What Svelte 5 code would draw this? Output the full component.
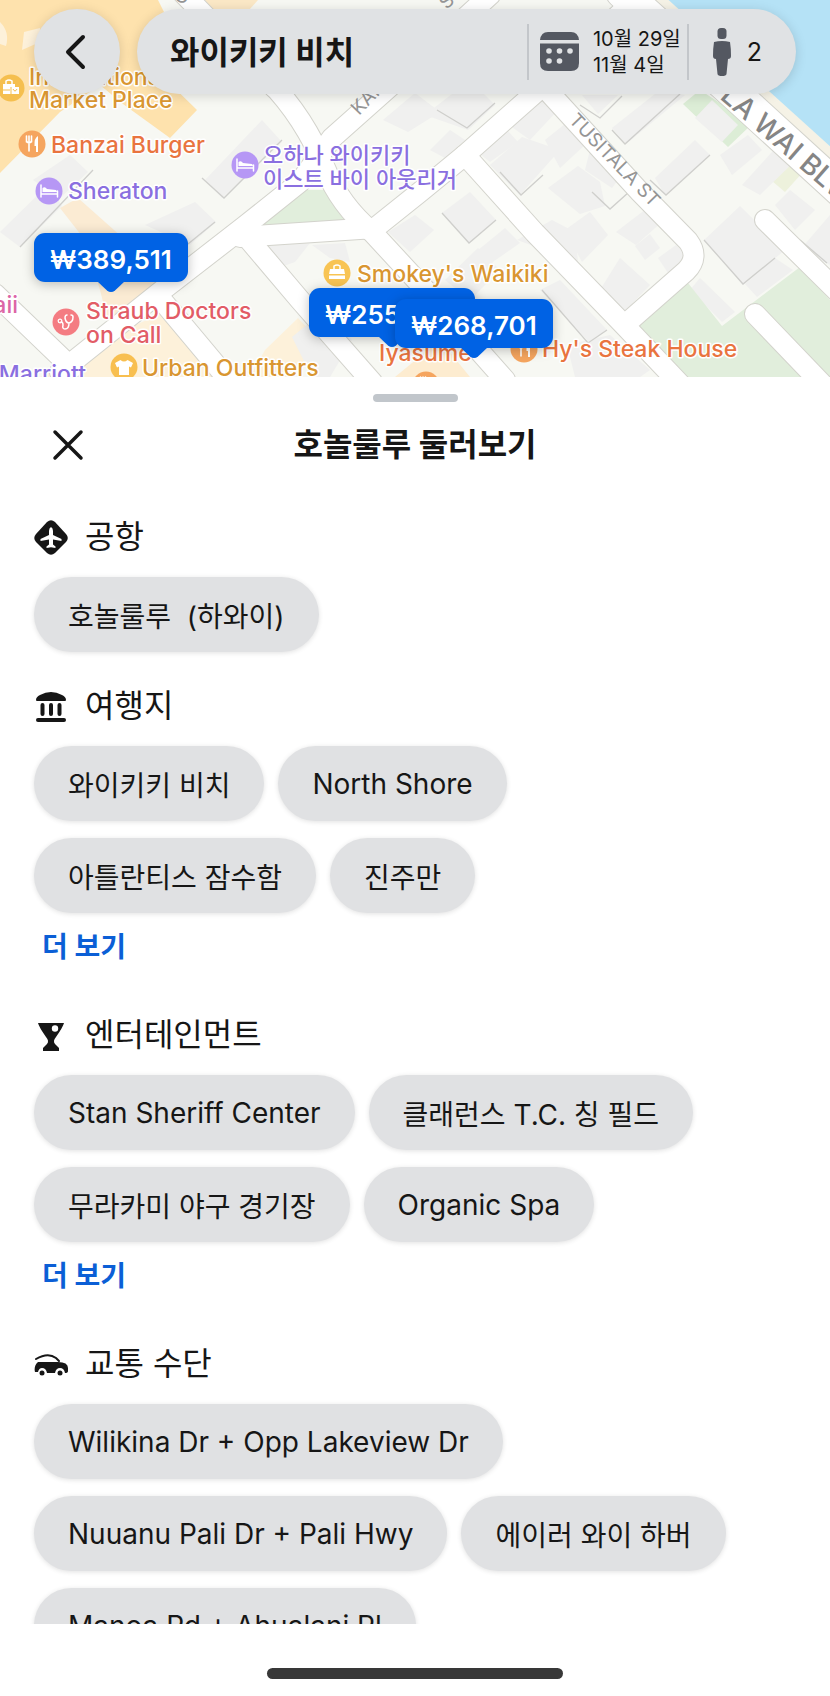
<script>

	let destination = '와이키키 비치';
	let city = '호놀룰루';
	let guests = 2;

	let sections = [
		{
			icon: 'airport',
			title: '공항',
			places: ['호놀룰루\u00a0 (하와이)'],
			more: false
		},
		{
			icon: 'landmark',
			title: '여행지',
			places: ['와이키키 비치', 'North Shore', '아틀란티스 잠수함', '진주만'],
			more: true
		},
		{
			icon: 'drink',
			title: '엔터테인먼트',
			places: ['Stan Sheriff Center', '클래런스 T.C. 칭 필드', '무라카미 야구 경기장', 'Organic Spa'],
			more: true
		},
		{
			icon: 'car',
			title: '교통 수단',
			places: ['Wilikina Dr + Opp Lakeview Dr', 'Nuuanu Pali Dr + Pali Hwy', '에이러 와이 하버', 'Manoa Rd + Ahualani Pl'],
			more: false
		}
	];

	// left/top are the corner of the tag on the map
	let prices = [
		{ text: '₩389,511', left: 34, top: 233, width: 154 },
		{ text: '₩255', left: 309, top: 288, width: 166 },
		{ text: '₩268,701', left: 395, top: 299, width: 158 }
	];

	let roads = [
		'M60 372 L160 292 L245 226 L300 182 L332 138 L395 82 L490 -5',
		'M268 80 Q305 118 325 168 Q340 205 372 232 L420 284 L505 380',
		'M240 237 L375 228 L420 192 L465 155 L535 93 L640 -5',
		'M465 155 L535 233 L625 326 L680 384',
		'M545 88 L640 192 L688 241 Q700 257 686 271 L628 322',
		'M245 235 L300 300 L372 382',
		'M-5 294 L72 368',
		'M160 298 L232 384',
		'M180 -10 L275 88',
		'M765 220 L840 294',
		'M755 314 L826 388'
	];

	let buildings = [
		'205,180 262,120 282,142 222,198',
		'0,232 48,185 62,206 20,247',
		'145,225 195,202 216,222 190,245',
		'33,180 70,155 88,172 60,198',
		'383,120 415,93 440,112 408,132',
		'425,115 470,80 495,105 468,130',
		'430,150 450,130 465,140 445,158',
		'475,150 500,122 518,142 490,162',
		'502,120 545,90 560,108 530,140',
		'490,165 522,137 560,150 520,195',
		'545,140 570,120 588,142 560,168',
		'582,95 598,114 618,95',
		'612,128 660,90 685,95 626,144',
		'655,178 695,140 710,155 665,195',
		'720,155 748,135 762,150 732,175',
		'742,185 780,143 798,158 760,195',
		'548,188 578,166 600,182 605,206 580,214',
		'442,213 470,192 496,220 469,243',
		'472,255 505,228 520,243 490,264',
		'517,240 552,220 575,232 578,262',
		'565,230 590,212 608,235 582,262',
		'616,232 650,206 664,220 636,245',
		'635,246 650,234 660,248 645,260',
		'600,290 620,258 650,285 624,312',
		'658,258 676,245 690,258 670,276',
		'704,240 740,206 785,250 743,285',
		'745,284 775,258 793,270 757,297',
		'690,290 700,278 735,312 722,322',
		'775,205 790,190 815,210 795,230',
		'800,250 830,215 830,265',
		'540,290 560,280 607,330 590,343',
		'567,345 610,335 650,370 640,377 575,377',
		'262,246 310,243 295,262 278,268',
		'312,245 345,243 350,262 330,258',
		'388,232 415,215 434,230 410,252',
		'445,280 478,248 500,270 470,300',
		'292,337 325,310 352,340 330,377 312,377',
		'590,150 625,170 612,188 585,170'
	];

	let shadows = [
		'202,178 224,198 282,140',
		'20,247 60,205 93,170',
		'442,213 469,243 496,220',
		'592,192 610,209 629,192',
		'500,172 521,195 543,175',
		'612,130 625,144 680,94',
		'704,240 743,284 775,258',
		'437,110 467,128 495,103',
		'800,240 827,263',
		'542,290 588,343 607,330',
		'580,105 600,118 622,96',
		'650,180 666,195 710,155',
		'188,244 215,222',
		'600,290 624,313 660,282'
	];

	let pois = [
		{ kind: 'shop', x: 11, y: 88, color: '#f5bf4f' },
		{ kind: 'food', x: 32, y: 144, color: '#f5a55f' },
		{ kind: 'hotel', x: 49, y: 191, color: '#b697f5' },
		{ kind: 'hotel', x: 245, y: 165, color: '#b697f5' },
		{ kind: 'doctor', x: 66, y: 322, color: '#f47c82' },
		{ kind: 'shirt', x: 124, y: 367, color: '#f8bf50' },
		{ kind: 'case', x: 337, y: 273, color: '#f8c453' },
		{ kind: 'food', x: 524, y: 349, color: '#f5a55f' },
		{ kind: 'food', x: 426, y: 385, color: '#f5a55f' }
	];

	let labels = [
		{ text: 'International', x: 29, y: 85, color: '#d99631' },
		{ text: 'Market Place', x: 29, y: 108, color: '#d99631' },
		{ text: 'Banzai Burger', x: 51, y: 153, color: '#e9743f' },
		{ text: 'Sheraton', x: 68, y: 199, color: '#8a6fe0' },
		{ text: '오하나 와이키키', x: 263, y: 163, color: '#8a6fe0', korean: true },
		{ text: '이스트 바이 아웃리거', x: 263, y: 187, color: '#8a6fe0', korean: true },
		{ text: 'Straub Doctors', x: 86, y: 319, color: '#e25c66' },
		{ text: 'on Call', x: 86, y: 343, color: '#e25c66' },
		{ text: 'Urban Outfitters', x: 142, y: 376, color: '#d99631' },
		{ text: "Smokey's Waikiki", x: 357, y: 282, color: '#d99631' },
		{ text: 'Iyasume', x: 379, y: 361, color: '#e9743f' },
		{ text: "Hy's Steak House", x: 542, y: 357, color: '#e9743f' },
		{ text: 'Hawaii', x: 18, y: 313, color: '#dc66a6', end: true },
		{ text: 'Marriott', x: 86, y: 382, color: '#8a6fe0', end: true }
	];

</script>

<main>
	<div class="map">
		<svg class="tiles" viewBox="0 0 830 377" preserveAspectRatio="xMinYMin slice">
			<rect width="830" height="377" fill="#f7f8f3" />
			<polygon points="0,0 158,0 168,20 152,66 197,110 170,138 123,104 100,85 60,112 0,173" fill="#fee2ad" />
			<polygon points="205,0 258,0 240,20 215,20" fill="#fbe8c6" />
			<path d="M22 50 L24 32 L40 28 L40 42 Z M0 22 Q10 32 6 46 L0 44 Z" fill="#fdf1da" />
			<polygon points="60,208 78,198 150,262 160,300 110,330 100,290 85,240" fill="#fbebd3" />
			<polygon points="40,377 90,345 165,312 222,377" fill="#fdf1da" />
			<polygon points="265,350 298,318 320,342 290,377 250,377" fill="#fdf1da" />
			<polygon points="395,377 440,340 470,377" fill="#fdecd0" />
			<polygon points="257,226 290,190 330,190 345,221" fill="#e1eedc" />
			<polygon points="765,175 780,158 803,172 785,192" fill="#edf1dc" />
			{#each buildings as points}
				<polygon {points} fill="#f0f0ef" />
			{/each}
			<polygon points="634,326 688,283 722,326 800,267 830,300 830,377 676,377" fill="#e1eedc" />
			<polygon points="683,104 700,90 752,124 728,147" fill="#dcedd6" />
			<polygon points="695,118 712,100 738,125 722,142" fill="#f0f0ef" />
			{#each shadows as points}
				<polyline {points} fill="none" stroke="#cfcfcc" stroke-width="1.3" />
			{/each}
			<polygon points="655,0 830,0 830,160" fill="#b5e2f6" />
			<path d="M642 -16 L834 158" fill="none" stroke="#f5f2e6" stroke-width="12" />
			{#each roads as d}
				<path {d} class="road edge" />
			{/each}
			<path d="M622 -8 L735 94 L840 190" class="road edge wide" />
			{#each roads as d}
				<path {d} class="road" />
			{/each}
			<path d="M622 -8 L735 94 L840 190" class="road wide" />

			<g class="street">
				<text transform="translate(568 121) rotate(46)">TUSITALA ST</text>
				<text transform="translate(359 116) rotate(-46)">KAI</text>
				<text transform="translate(447 10) rotate(-46)">S</text>
				<text transform="translate(181 6) rotate(-46)">O</text>
				<text class="big" transform="translate(719 98) rotate(41)">LA WAI BLVD</text>
			</g>

			{#each pois as poi}
				<g transform="translate({poi.x} {poi.y})">
					<circle r="13.5" fill={poi.color} />
					{#if poi.kind == 'food'}
						<path d="M-5.5 -8 V-2 M-3 -8 V7 M-0.5 -8 V-2 M-5.5 -3 Q-3 1 -0.5 -3" fill="none" stroke="#fff" stroke-width="1.6" stroke-linecap="round" />
						<path d="M6 8 H4 V2 H2.5 Q2 -6 6 -8 Z" fill="#fff" />
					{:else if poi.kind == 'hotel'}
						<path d="M-8 -6 V6 M-8 3 H8.5 M8.5 0 V6" fill="none" stroke="#fff" stroke-width="1.5" stroke-linecap="round" />
						<path d="M-6.5 1 V-3 Q-4 -5 -2 -2 L7 -1 Q8 0 8 1 Z" fill="#fff" />
					{:else if poi.kind == 'case'}
						<path d="M-3 -4 V-7 Q0 -9 3 -7 V-4" fill="none" stroke="#fff" stroke-width="1.5" />
						<path d="M-7 -4 H7 L8 1 H-8 Z M-8 2.5 H8 V6 H-8 Z" fill="#fff" />
					{:else if poi.kind == 'shop'}
						<path d="M-5 -4 V-7 Q-2 -9 1 -7 V-4" fill="none" stroke="#fff" stroke-width="1.5" />
						<path d="M-8 -4 H4 V-1 H8 V6 H-8 Z" fill="#fff" />
						<path d="M-8 2 H-1 M0 -1 V6 M2 1 Q4 5 6 1" fill="none" stroke={poi.color} />
					{:else if poi.kind == 'shirt'}
						<path d="M-3.5 -7 Q0 -4 3.5 -7 L9 -4 L7 0.5 L5 -0.5 V8 H-5 V-0.5 L-7 0.5 L-9 -4 Z" fill="#fff" />
					{:else}
						<path d="M1 -7 Q-1 -7 -1 -4 Q0 1 3 1 Q7 0 7 -5 Q7 -7 5 -7 M3 1 Q3 7 -1 7 Q-4 7 -3 3 Q-3 0 -5 0" fill="none" stroke="#fff" stroke-width="1.5" stroke-linecap="round" />
						<circle cx="-6" cy="-1" r="1.8" fill="none" stroke="#fff" stroke-width="1.3" />
					{/if}
				</g>
			{/each}

			{#each labels as label}
				<text class="label" class:end={label.end} class:korean={label.korean} x={label.x} y={label.y} fill={label.color}>{label.text}</text>
			{/each}
		</svg>

		{#each prices as price}
			<button class="price" style="left: {price.left}px; top: {price.top}px; width: {price.width}px">
				{price.text}
				<svg class="tip" width="28" height="12" viewBox="0 0 28 12">
					<path d="M0 0 H28 L18 9.5 Q14 12.5 10 9.5 Z" fill="#0062e4" />
				</svg>
			</button>
		{/each}

		<header>
			<button class="back" aria-label="뒤로">
				<svg width="24" height="38" viewBox="0 0 24 38">
					<path d="M18 4 L3 19 L18 34" fill="none" stroke="#161616" stroke-width="4" stroke-linecap="round" stroke-linejoin="round" />
				</svg>
			</button>
			<div class="search">
				<button class="where">{destination}</button>
				<button class="when">
					<svg width="39" height="39" viewBox="0 0 39 39">
						<path d="M0 8 Q1 0 8 0 H31 Q38 0 39 8 Z" fill="#545861" />
						<path d="M0 11.5 H39 V31 Q39 39 31 39 H8 Q0 39 0 31 Z" fill="#545861" />
						<g fill="#e0e2e4">
							<circle cx="9" cy="19" r="2.8" />
							<circle cx="19.5" cy="19" r="2.8" />
							<circle cx="30" cy="19" r="2.8" />
							<circle cx="9" cy="29" r="2.8" />
							<circle cx="19.5" cy="29" r="2.8" />
						</g>
					</svg>
					<span>10월 29일<br />11월 4일</span>
				</button>
				<button class="who">
					<svg width="18" height="48" viewBox="0 0 18 48">
						<rect x="4.5" y="0" width="9" height="11" rx="3.5" fill="#545861" />
						<path d="M1 14 Q9 12 17 14 Q18 20 18 28 Q18 31 15 31 L13.5 46 Q13 48 9 48 Q5 48 4.5 46 L3 31 Q0 31 0 28 Q0 20 1 14 Z" fill="#545861" />
					</svg>
					<span>{guests}</span>
				</button>
			</div>
		</header>
	</div>

	<div class="sheet">
		<div class="handle"></div>
		<div class="titlebar">
			<button class="close" aria-label="닫기">
				<svg width="32" height="32" viewBox="0 0 32 32">
					<path d="M3 3 L29 29 M29 3 L3 29" stroke="#161616" stroke-width="3.5" stroke-linecap="round" />
				</svg>
			</button>
			<h1>{city} 둘러보기</h1>
		</div>

		<div class="list">
			{#each sections as section}
				<section>
					<h2>
						<svg width="34" height="36" viewBox="0 0 34 36">
							{#if section.icon == 'airport'}
								<path d="M13 3 Q17 -0.5 21 3 L32 15 Q35.5 19 32 23 L21 34 Q17 37.5 13 34 L2 23 Q-1.5 19 2 15 Z" fill="#161616" />
								<path d="M17 8 Q19 9 19 12 V16 L27.5 20 V22 L19 20.5 V25.5 L21.5 27.5 V29 L17 28.300 L12.5 29 V27.5 L15 25.5 V20.5 L6.5 22 V20 L15 16 V12 Q15 9 17 8 Z" fill="#fff" />
							{:else if section.icon == 'landmark'}
								<path d="M2 12 Q2 9 6 7 Q17 1 28 7 Q32 9 32 12 Q32 13 31 13 H3 Q2 13 2 12 Z" fill="#161616" />
								<path d="M8.5 17 V26 M17 17 V26 M25.5 17 V26" stroke="#161616" stroke-width="4" stroke-linecap="round" />
								<path d="M4 32 H30" stroke="#161616" stroke-width="4" stroke-linecap="round" />
							{:else if section.icon == 'drink'}
								<path d="M4 6 H30 Q29 10 22 20 Q18.500 24 21 27 L25 31 V34 H9 V31 L13 27 Q15.5 24 12 20 Q5 10 4 6 Z" fill="#161616" />
								<circle cx="21" cy="11.5" r="3.2" fill="#fff" />
							{:else}
								<path d="M2 13 Q14 6 22 12 L25 15" fill="none" stroke="#161616" stroke-width="2" stroke-linecap="round" />
								<path d="M4 16 H24 Q34 16 34 22 V25 Q34 27 31 27 Q30 22 26 22 Q22 22 21 27 H13 Q12 22 8 22 Q5 22 4 26 L1 26 Q-0.5 20 4 16 Z" fill="#161616" />
								<circle cx="8" cy="27" r="2.5" fill="#161616" />
								<circle cx="26" cy="27" r="2.5" fill="#161616" />
							{/if}
						</svg>
						{section.title}
					</h2>
					<div class="chips">
						{#each section.places as place}
							<button class="chip">{place}</button>
						{/each}
					</div>
					{#if section.more}
						<button class="more">더 보기</button>
					{/if}
				</section>
			{/each}
		</div>

		<footer>
			<div class="home"></div>
		</footer>
	</div>
</main>

<style>
	:global(body) {
		margin: 0;
		background: #fff;
	}

	main {
		display: flex;
		flex-direction: column;
		height: 100vh;
		background: #fff;
		color: #161616;
		font-family: Inter, "Noto Sans CJK KR", sans-serif;
	}

	button {
		margin: 0;
		padding: 0;
		border: 0;
		background: none;
		color: inherit;
		font: inherit;
		cursor: pointer;
	}

	svg {
		display: block;
		flex: none;
	}

	.map {
		position: relative;
		flex: none;
		height: 377px;
		overflow: hidden;
	}

	.tiles {
		position: absolute;
		inset: 0;
		width: 100%;
		height: 100%;
	}

	.road {
		fill: none;
		stroke: #fff;
		stroke-width: 20px;
		stroke-linecap: round;
		stroke-linejoin: round;
	}

	.road.edge {
		stroke: #d3d3cc;
		stroke-width: 22px;
	}

	.road.wide {
		stroke-width: 32px;
	}

	.road.edge.wide {
		stroke-width: 34px;
	}

	.label {
		font-size: 23px;
		font-weight: 500;
		stroke: #fff;
		stroke-width: 3px;
		stroke-linejoin: round;
		paint-order: stroke;
	}

	.label.korean {
		font-size: 22px;
	}

	.label.end {
		text-anchor: end;
	}

	.street text {
		fill: #959595;
		font-size: 19px;
	}

	.street .big {
		fill: #858585;
		font-size: 28px;
		font-weight: 500;
	}

	.price {
		position: absolute;
		box-sizing: border-box;
		height: 49px;
		padding: 4px 16px 0;
		border-radius: 11px;
		background: #0062e4;
		box-shadow: 0 2px 12px rgba(0, 0, 0, 0.25);
		color: #fff;
		font-size: 26px;
		font-weight: 600;
		text-align: left;
		white-space: nowrap;
	}

	.tip {
		position: absolute;
		top: 48px;
		left: calc(50% - 14px);
	}

	header {
		position: relative;
		display: flex;
		gap: 17px;
		padding: 9px 34px;
	}

	.back,
	.search {
		height: 85px;
		border-radius: 43px;
		background: #e0e2e4;
		box-shadow: 0 2px 12px rgba(0, 0, 0, 0.15);
	}

	.back {
		display: flex;
		flex: none;
		align-items: center;
		justify-content: center;
		width: 86px;
	}

	.search {
		display: flex;
		flex: 1;
		align-items: center;
		box-sizing: border-box;
		padding: 0 34px 0 33px;
	}

	.where {
		flex: 1;
		padding-bottom: 4px;
		font-size: 32px;
		font-weight: 700;
		text-align: left;
	}

	.when,
	.who {
		display: flex;
		align-items: center;
		height: 56px;
		border-left: 2px solid #c3c6ca;
	}

	.when {
		gap: 14px;
		padding: 0 6px 0 11px;
		font-size: 20px;
		line-height: 26px;
		text-align: left;
		white-space: nowrap;
	}

	.who {
		gap: 16px;
		padding-left: 24px;
		font-size: 25px;
	}

	.sheet {
		display: flex;
		flex: 1;
		flex-direction: column;
		min-height: 0;
	}

	.handle {
		flex: none;
		width: 85px;
		height: 8px;
		margin: 17px auto 0;
		border-radius: 4px;
		background: #c1c6cb;
	}

	.titlebar {
		display: grid;
		flex: none;
		grid-template-columns: 68px 1fr 68px;
		align-items: center;
		padding: 19px 34px 48px;
	}

	.close {
		display: flex;
		align-items: center;
		justify-content: center;
		width: 68px;
		height: 48px;
	}

	h1 {
		margin: 0;
		font-size: 32px;
		font-weight: 700;
		line-height: 48px;
		text-align: center;
	}

	.list {
		display: flex;
		flex: 1;
		flex-direction: column;
		gap: 34px;
		min-height: 0;
		padding-left: 34px;
		padding-right: 34px;
		overflow-y: auto;
		scrollbar-width: none;
	}

	h2 {
		display: flex;
		align-items: center;
		gap: 17px;
		height: 40px;
		margin: 0 0 20px;
		font-size: 32px;
		font-weight: 400;
		line-height: 40px;
	}

	.chips {
		display: flex;
		flex-wrap: wrap;
		gap: 17px 14px;
	}

	.chip {
		height: 75px;
		padding: 0 34px;
		border-radius: 38px;
		background: #e0e1e3;
		box-shadow: 0 1px 5px rgba(0, 0, 0, 0.12);
		font-size: 28px;
		white-space: nowrap;
	}

	.more {
		display: block;
		height: 36px;
		margin: 16px 0;
		padding: 0 8px;
		color: #0b5fd6;
		font-size: 28px;
		font-weight: 700;
		line-height: 36px;
	}

	footer {
		display: flex;
		flex: none;
		justify-content: center;
		box-sizing: border-box;
		height: 72px;
		padding-top: 44px;
	}

	.home {
		width: 296px;
		height: 11px;
		border-radius: 6px;
		background: #383838;
	}
</style>
